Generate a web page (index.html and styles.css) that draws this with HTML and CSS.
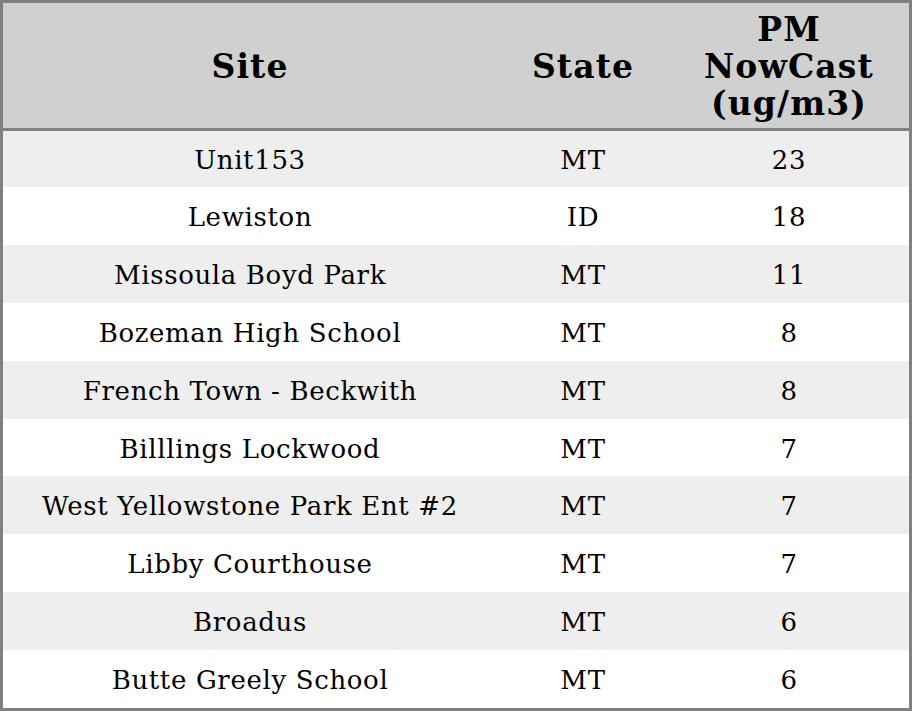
FILE: index.html
```html
<!DOCTYPE html>
<html>
<head>
<meta charset="utf-8">
<link rel="stylesheet" href="styles.css">
</head>
<body>
<table class="aq">
  <thead>
    <tr>
      <th class="c-site">Site</th>
      <th class="c-state">State</th>
      <th class="c-pm">PM<br>NowCast<br>(ug/m3)</th>
    </tr>
  </thead>
  <tbody>
    <tr class="first"><td>Unit153</td><td>MT</td><td>23</td></tr>
    <tr><td>Lewiston</td><td>ID</td><td>18</td></tr>
    <tr><td>Missoula Boyd Park</td><td>MT</td><td>11</td></tr>
    <tr><td>Bozeman High School</td><td>MT</td><td>8</td></tr>
    <tr><td>French Town - Beckwith</td><td>MT</td><td>8</td></tr>
    <tr><td>Billlings Lockwood</td><td>MT</td><td>7</td></tr>
    <tr><td>West Yellowstone Park Ent #2</td><td>MT</td><td>7</td></tr>
    <tr><td>Libby Courthouse</td><td>MT</td><td>7</td></tr>
    <tr><td>Broadus</td><td>MT</td><td>6</td></tr>
    <tr><td>Butte Greely School</td><td>MT</td><td>6</td></tr>
  </tbody>
</table>
</body>
</html>
```

FILE: styles.css
```css
html, body {
  margin: 0;
  padding: 0;
  background: #ffffff;
}
.aq {
  border-collapse: separate;
  border-spacing: 0;
  border: 3px solid #808080;
  width: 912px;
  table-layout: fixed;
  font-family: "DejaVu Serif", serif;
  color: #000;
}
.aq th {
  background: #d0d0d0;
  font-size: 33px;
  font-weight: bold;
  letter-spacing: 1.1px;
  line-height: 37px;
  height: 123px;
  padding: 2px 0 0;
  text-align: center;
  vertical-align: middle;
  border-bottom: 3px solid #808080;
}
.aq .c-site { width: 494px; }
.aq .c-state { width: 172px; }
.aq .c-pm { width: 240px; }
.aq td {
  font-size: 26px;
  letter-spacing: 0.65px;
  height: 55.9px;
  padding: 2px 0 0;
  text-align: center;
  vertical-align: middle;
}
.aq tbody tr.first td {
  height: 54px;
}
.aq tbody tr:nth-child(odd) td {
  background: #eeeeee;
}
```
